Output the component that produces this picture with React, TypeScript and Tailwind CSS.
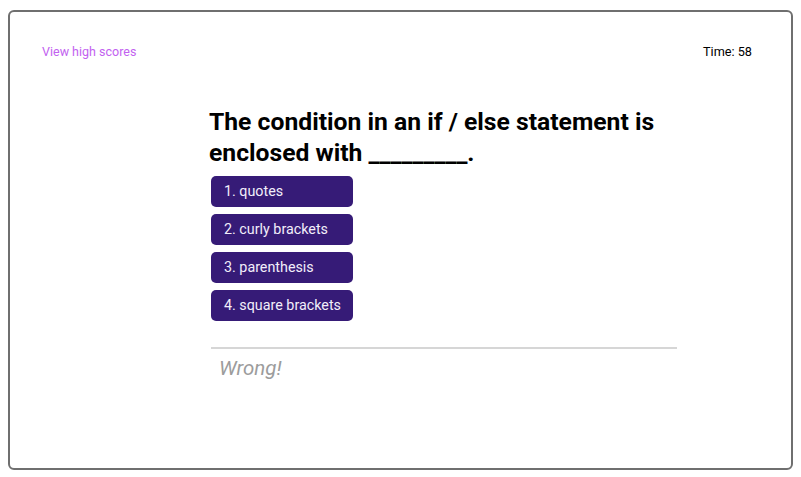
import React from "react";

export default function App() {
  const answers = ["1. quotes", "2. curly brackets", "3. parenthesis", "4. square brackets"];
  return (
    <div className="w-[801px] h-[477px] bg-white" style={{ fontFamily: "Roboto, 'Noto Sans', sans-serif" }}>
      <div className="ml-[8px] mt-[10px] w-[785px] h-[460px] border-2 border-[#6f6f6f] rounded-[6px] flex flex-col">
        <div className="flex justify-between items-center pl-[32px] pr-[39px] pt-[31px] h-[49px]">
          <span className="text-[12.5px] text-[#c262f0]">View high scores</span>
          <span className="text-[12.7px] text-black">Time: 58</span>
        </div>
        <div className="pl-[199px] pt-[45px] w-[690px]">
          <h1 className="text-[24.7px] leading-[31px] font-bold text-black">
            The condition in an if / else statement is
            <br />
            enclosed with _________.
          </h1>
          <div className="flex flex-col gap-[7px] mt-[8px] pl-[2px]">
            {answers.map((a) => (
              <button
                key={a}
                className="w-[142px] h-[31px] rounded-[5px] bg-[#361b77] text-[#f2eefa] text-[14.3px] text-left pl-[13px]"
              >
                {a}
              </button>
            ))}
          </div>
          <div className="mt-[26px] ml-[2px] w-[466px] h-[2px] bg-[#d6d6d6]" />
          <div className="ml-[10px] mt-[4px] text-[20.5px] italic text-[#9c9c9c]">Wrong!</div>
        </div>
      </div>
    </div>
  );
}
